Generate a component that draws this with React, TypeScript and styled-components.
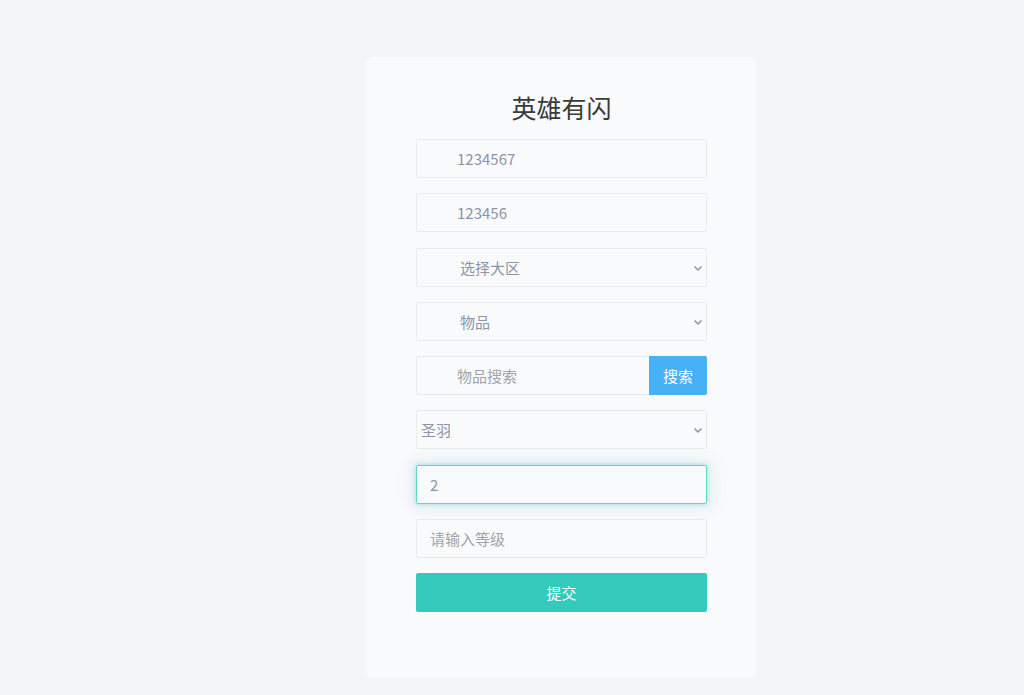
import * as React from "react";
import styled, { createGlobalStyle } from "styled-components";

const GlobalStyle = createGlobalStyle`
  html, body {
    margin: 0;
    padding: 0;
    background: #f4f5f9;
    font-family: "Noto Sans CJK SC", "Liberation Sans", sans-serif;
  }
`;

const Page = styled.div`
  display: flex;
  justify-content: center;
  padding: 57px 0 17px 98px;
  box-sizing: border-box;
  min-height: 695px;
`;

const Card = styled.div`
  width: 390px;
  height: 621px;
  box-sizing: border-box;
  background: #f9fafc;
  border-radius: 6px;
  padding: 28px 49px 0 50px;
  display: flex;
  flex-direction: column;
`;

const Title = styled.h1`
  margin: 0 0 10px;
  text-align: center;
  font-size: 25px;
  line-height: 44px;
  font-weight: 400;
  color: #3a3a3a;
`;

const Form = styled.form`
  display: flex;
  flex-direction: column;
  gap: 15.25px;
`;

const Field = styled.input<{ $indent?: number; $focused?: boolean }>`
  width: 100%;
  height: 39px;
  box-sizing: border-box;
  border: 1px solid ${(p) => (p.$focused ? "#5fd6ca" : "#ebebeb")};
  border-radius: 2px;
  background: #f9fafc;
  padding: 0 12px 0 ${(p) => p.$indent ?? 13}px;
  font-family: inherit;
  font-size: 15px;
  color: #8b95a5;
  outline: none;
  box-shadow: ${(p) =>
    p.$focused
      ? "0 0 5px rgba(51, 202, 187, 0.5), 0 0 14px 7px rgba(226, 234, 243, 0.55)"
      : "none"};

  &::placeholder {
    color: #a0a4ab;
  }
`;

const SelectWrap = styled.div`
  position: relative;
`;

const Select = styled.div<{ $indent: number }>`
  height: 39px;
  box-sizing: border-box;
  border: 1px solid #ebebeb;
  border-radius: 2px;
  background: #f9fafc;
  display: flex;
  align-items: center;
  padding-left: ${(p) => p.$indent}px;
  font-size: 15px;
  color: #8b95a5;
`;

const Chevron = styled.svg`
  position: absolute;
  right: 3px;
  top: 14px;
`;

const SearchRow = styled.div`
  display: flex;
  height: 39px;
`;

const SearchInput = styled.input`
  flex: 1;
  min-width: 0;
  box-sizing: border-box;
  border: 1px solid #ebebeb;
  border-right: none;
  border-radius: 2px 0 0 2px;
  background: #f9fafc;
  padding-left: 40px;
  font-family: inherit;
  font-size: 15px;
  color: #8b95a5;
  outline: none;

  &::placeholder {
    color: #a0a4ab;
  }
`;

const SearchButton = styled.button`
  width: 58px;
  border: none;
  border-radius: 0 2px 2px 0;
  background: #48b0f7;
  color: #fff;
  font-family: inherit;
  font-size: 15px;
  padding: 0;
`;

const SubmitButton = styled.button`
  height: 39px;
  border: none;
  border-radius: 2px;
  background: #33cabb;
  color: #fff;
  font-family: inherit;
  font-size: 15px;
`;

const ChevronIcon = () => (
  <Chevron width="12" height="12" viewBox="0 0 12 12">
    <path d="M2.5 4.5 L6 8 L9.5 4.5" fill="none" stroke="#8b95a5" strokeWidth="1.5" />
  </Chevron>
);

const DropDown = ({ label, indent }: { label: string; indent: number }) => (
  <SelectWrap>
    <Select $indent={indent}>{label}</Select>
    <ChevronIcon />
  </SelectWrap>
);

export default function App() {
  return (
    <>
      <GlobalStyle />
      <Page>
        <Card>
          <Title>英雄有闪</Title>
          <Form onSubmit={(e) => e.preventDefault()}>
            <Field $indent={40} defaultValue="1234567" />
            <Field $indent={40} defaultValue="123456" />
            <DropDown label="选择大区" indent={43} />
            <DropDown label="物品" indent={43} />
            <SearchRow>
              <SearchInput placeholder="物品搜索" />
              <SearchButton type="button">搜索</SearchButton>
            </SearchRow>
            <DropDown label="圣羽" indent={4} />
            <Field $focused defaultValue="2" />
            <Field placeholder="请输入等级" />
            <SubmitButton type="submit">提交</SubmitButton>
          </Form>
        </Card>
      </Page>
    </>
  );
}
